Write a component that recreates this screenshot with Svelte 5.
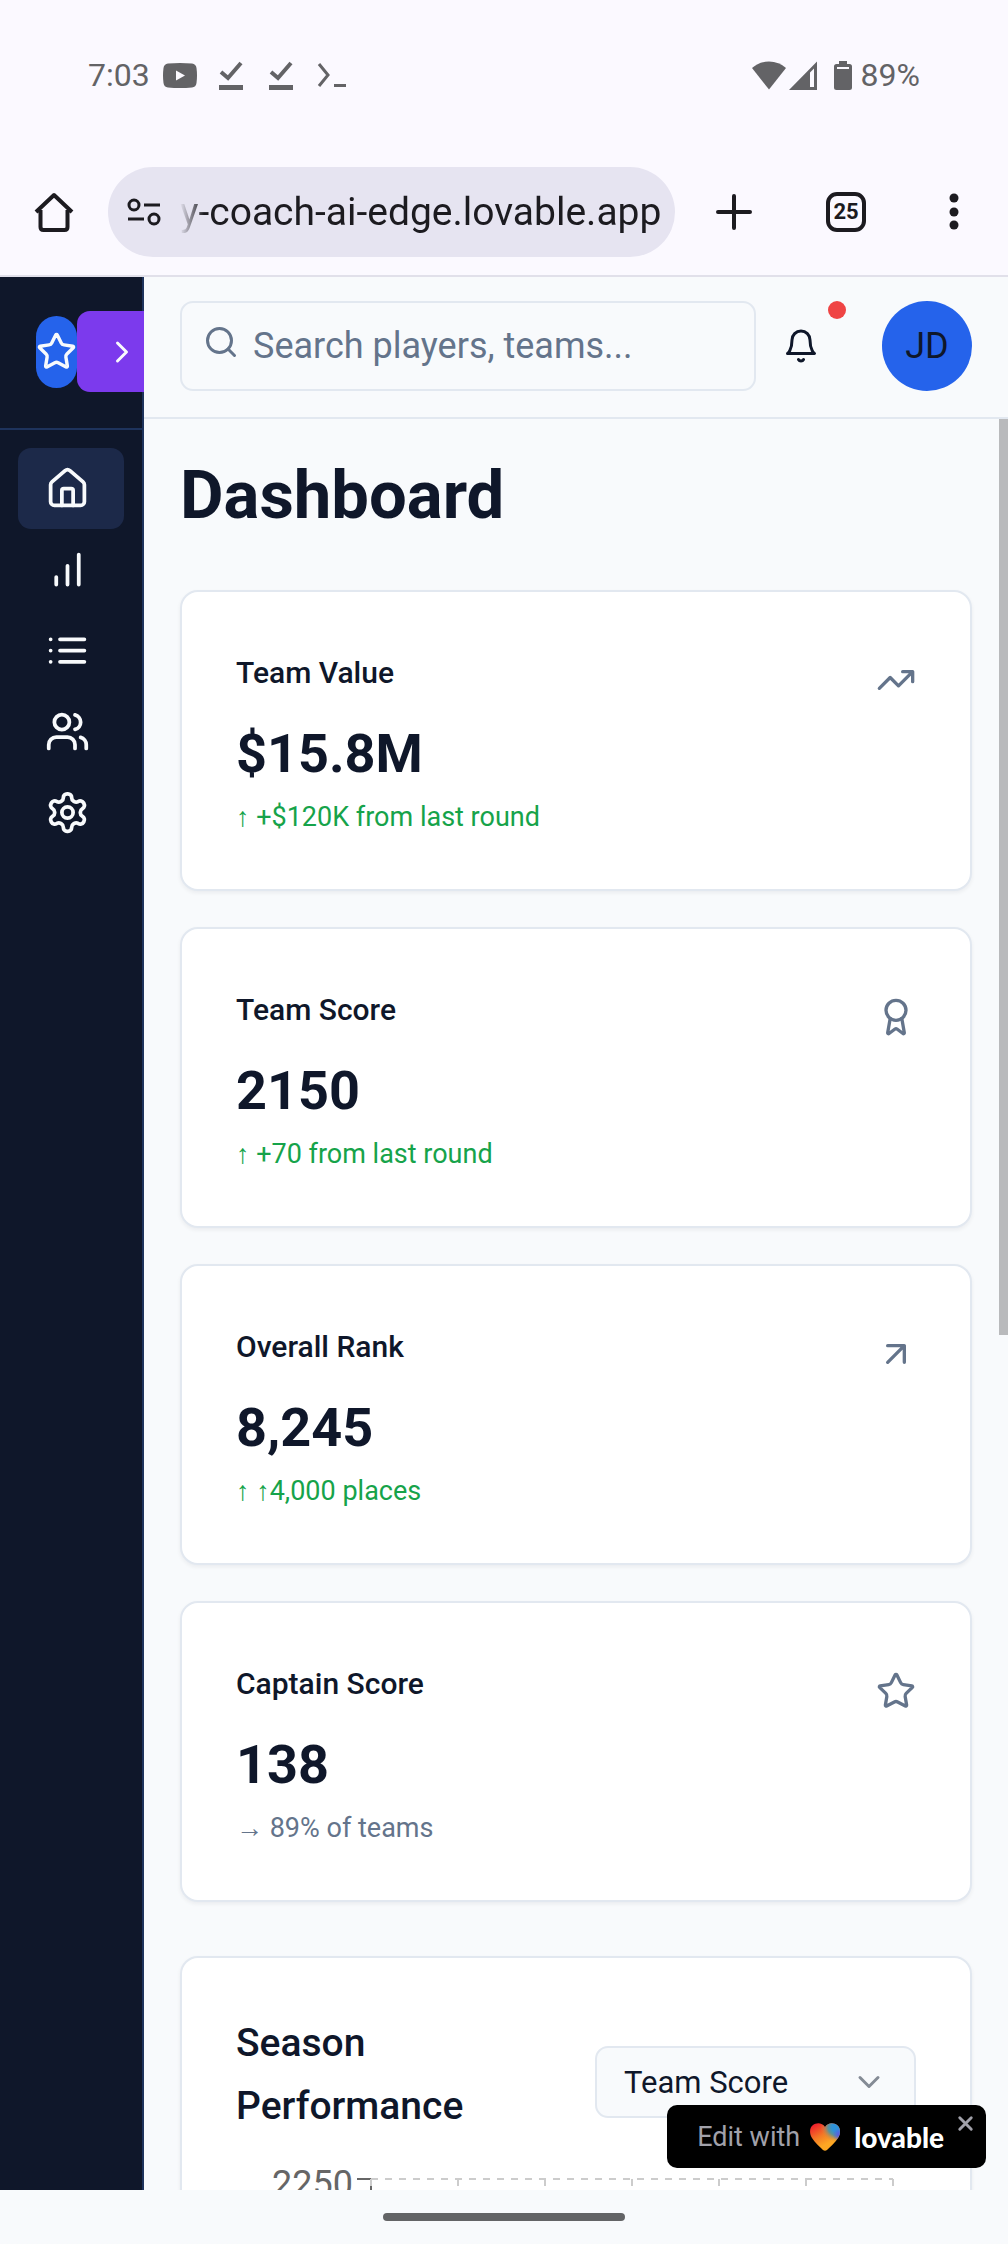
<script>
  const navItems = [
    { label: 'Dashboard', icon: 'home', active: true },
    { label: 'Statistics', icon: 'bars' },
    { label: 'Rankings', icon: 'list' },
    { label: 'Team', icon: 'users' },
    { label: 'Settings', icon: 'settings' },
  ];

  const stats = [
    { title: 'Team Value', value: '$15.8M', arrow: '↑', note: '+$120K from last round', trend: 'up', icon: 'trending' },
    { title: 'Team Score', value: '2150', arrow: '↑', note: '+70 from last round', trend: 'up', icon: 'award' },
    { title: 'Overall Rank', value: '8,245', arrow: '↑', note: '↑4,000 places', trend: 'up', icon: 'arrow' },
    { title: 'Captain Score', value: '138', arrow: '→', note: '89% of teams', trend: 'flat', icon: 'star' },
  ];

  const gridLines = [135, 222, 309, 396, 483, 570, 657];
  let search = $state('');
  let metric = $state('Team Score');
  let url = $state('y-coach-ai-edge.lovable.app');
</script>

{#snippet icon(name)}
  <svg class="icon" viewBox="0 0 24 24" aria-hidden="true">
    {#if name === 'home'}
      <path d="M15 21v-8a1 1 0 0 0-1-1h-4a1 1 0 0 0-1 1v8" />
      <path d="M3 10a2 2 0 0 1 .709-1.528l7-5.999a2 2 0 0 1 2.582 0l7 5.999A2 2 0 0 1 21 10v9a2 2 0 0 1-2 2H5a2 2 0 0 1-2-2z" />
    {:else if name === 'bars'}
      <path d="M12 20V10M18 20V4M6 20v-4" />
    {:else if name === 'list'}
      <path d="M8 6h13M8 12h13M8 18h13M3 6h.01M3 12h.01M3 18h.01" />
    {:else if name === 'users'}
      <path d="M16 21v-2a4 4 0 0 0-4-4H6a4 4 0 0 0-4 4v2" />
      <circle cx="9" cy="7" r="4" />
      <path d="M22 21v-2a4 4 0 0 0-3-3.87M16 3.13a4 4 0 0 1 0 7.75" />
    {:else if name === 'settings'}
      <path d="M12.22 2h-.44a2 2 0 0 0-2 2v.18a2 2 0 0 1-1 1.73l-.43.25a2 2 0 0 1-2 0l-.15-.08a2 2 0 0 0-2.73.73l-.22.38a2 2 0 0 0 .73 2.73l.15.1a2 2 0 0 1 1 1.72v.51a2 2 0 0 1-1 1.74l-.15.09a2 2 0 0 0-.73 2.73l.22.38a2 2 0 0 0 2.73.73l.15-.08a2 2 0 0 1 2 0l.43.25a2 2 0 0 1 1 1.73V20a2 2 0 0 0 2 2h.44a2 2 0 0 0 2-2v-.18a2 2 0 0 1 1-1.73l.43-.25a2 2 0 0 1 2 0l.15.08a2 2 0 0 0 2.73-.73l.22-.39a2 2 0 0 0-.73-2.73l-.15-.08a2 2 0 0 1-1-1.74v-.5a2 2 0 0 1 1-1.74l.15-.09a2 2 0 0 0 .73-2.73l-.22-.38a2 2 0 0 0-2.73-.73l-.15.08a2 2 0 0 1-2 0l-.43-.25a2 2 0 0 1-1-1.73V4a2 2 0 0 0-2-2z" />
      <circle cx="12" cy="12" r="3" />
    {:else if name === 'star'}
      <path d="M11.525 2.295a.53.53 0 0 1 .95 0l2.31 4.679a2.123 2.123 0 0 0 1.595 1.16l5.166.756a.53.53 0 0 1 .294.904l-3.736 3.638a2.123 2.123 0 0 0-.611 1.878l.882 5.14a.53.53 0 0 1-.771.56l-4.618-2.428a2.122 2.122 0 0 0-1.973 0L6.396 21.01a.53.53 0 0 1-.77-.56l.881-5.139a2.122 2.122 0 0 0-.611-1.879L2.16 9.795a.53.53 0 0 1 .294-.906l5.165-.755a2.122 2.122 0 0 0 1.597-1.16z" />
    {:else if name === 'trending'}
      <path d="m22 7-8.500 8.500-5-5L2 17M16 7h6v6" />
    {:else if name === 'award'}
      <path d="m15.477 12.890 1.515 8.526a.5.5 0 0 1-.810.470l-3.580-2.687a1 1 0 0 0-1.197 0l-3.586 2.686a.5.5 0 0 1-.810-.469l1.514-8.526" />
      <circle cx="12" cy="8" r="6" />
    {:else if name === 'arrow'}
      <path d="M7 7h10v10M7 17 17 7" />
    {:else if name === 'search'}
      <circle cx="11" cy="11" r="8" /><path d="m21 21-4.300-4.300" />
    {:else if name === 'bell'}
      <path d="M6 8a6 6 0 0 1 12 0c0 7 3 9 3 9H3s3-2 3-9M10.300 21a1.940 1.940 0 0 0 3.400 0" />
    {:else if name === 'right'}
      <path d="m9 18 6-6-6-6" />
    {:else if name === 'down'}
      <path d="m6 9 6 6 6-6" />
    {:else if name === 'close'}
      <path d="M18 6 6 18M6 6l12 12" />
    {/if}
  </svg>
{/snippet}

{#snippet checkMark()}
  <svg class="status-check" viewBox="0 0 24 29" aria-hidden="true">
    <path d="M2 11l7 6L22 2" fill="none" stroke="currentColor" stroke-width="4" />
    <path d="M0 24h24v5H0z" fill="currentColor" />
  </svg>
{/snippet}

<div class="screen">
  <header class="status">
    <div class="status-left">
      <span>7:03</span>
      <svg class="status-video" viewBox="0 0 34 25" aria-hidden="true">
        <path fill-rule="evenodd" fill="currentColor" d="M5 .5Q17-.5 29 .5Q33 1 33.500 5Q34.500 12.500 33.500 20Q33 24 29 24.500Q17 25.500 5 24.500Q1 24 .5 20Q-.5 12.500 .5 5Q1 1 5 .5ZM13 7.500v10l9-5z" />
      </svg>
      {@render checkMark()}
      {@render checkMark()}
      <svg class="status-terminal" viewBox="0 0 32 26" aria-hidden="true">
        <path d="M2 2l9 11-9 11" fill="none" stroke="currentColor" stroke-width="3" />
        <path d="M17 22h12v3H17z" fill="currentColor" />
      </svg>
    </div>
    <div class="status-right">
      <svg class="wifi" viewBox="0 0 34 29" aria-hidden="true"><path fill="currentColor" d="M0 7Q7 .5 17 .5T34 7L17 28.500z" /></svg>
      <svg class="signal" viewBox="0 0 28 29" aria-hidden="true"><path fill-rule="evenodd" fill="currentColor" d="M28 .5V29H0zM21 11.500V26h4V7.500z" /></svg>
      <svg class="battery" viewBox="0 0 18 29" aria-hidden="true"><path fill-rule="evenodd" fill="currentColor" d="M5 0h8v3h2.500Q18 3 18 5.500v21Q18 29 15.500 29h-13Q0 29 0 26.500v-21Q0 3 2.500 3H5zM3 6v2h12V6z" /></svg>
      <span>89%</span>
    </div>
  </header>

  <div class="toolbar">
    <button class="tool" aria-label="Home page">
      <svg class="tool-icon" viewBox="0 0 40 40" aria-hidden="true">
        <path d="M2 20 20 3l18 17M6.500 18v17q0 3 3 3h21q3 0 3-3V18" fill="none" stroke="currentColor" stroke-width="4" stroke-linejoin="round" />
      </svg>
    </button>
    <div class="omnibox">
      <svg class="tune" viewBox="0 0 34 28" fill="none" stroke="currentColor" aria-hidden="true">
        <circle cx="7" cy="7" r="5" stroke-width="3" /><path d="M17 7h16M1 21h16" stroke-width="3" />
        <circle cx="27" cy="21" r="5" stroke-width="3" />
      </svg>
      <input aria-label="Address" bind:value={url} />
    </div>
    <button class="tool plus" aria-label="New tab">
      <svg class="tool-icon" viewBox="0 0 40 40" aria-hidden="true"><path d="M20 4v32M4 20h32" stroke="currentColor" stroke-width="4" stroke-linecap="round" /></svg>
    </button>
    <button class="tool tabs" aria-label="Open tabs"><span>25</span></button>
    <button class="tool more" aria-label="Menu">
      <svg class="tool-icon" viewBox="0 0 40 40" fill="currentColor" aria-hidden="true"><circle cx="20" cy="6" r="4.500" /><circle cx="20" cy="20" r="4.500" /><circle cx="20" cy="33" r="4.500" /></svg>
    </button>
  </div>

  <div class="app">
    <aside>
      <div class="brand">
        <span class="logo">{@render icon('star')}</span>
        <button class="expand" aria-label="Expand sidebar">{@render icon('right')}</button>
      </div>
      <nav aria-label="Main">
        {#each navItems as item}
          <a href="#{item.icon}" class:active={item.active} aria-label={item.label}>{@render icon(item.icon)}</a>
        {/each}
      </nav>
    </aside>

    <div class="content">
      <div class="topbar">
        <label class="search">
          {@render icon('search')}
          <input type="text" aria-label="Search" placeholder="Search players, teams..." bind:value={search} />
        </label>
        <button class="bell" aria-label="Notifications">{@render icon('bell')}<span class="dot"></span></button>
        <button class="avatar" aria-label="Account">JD</button>
      </div>

      <div class="viewport">
        <main>
          <h1>Dashboard</h1>
          <div class="cards">
            {#each stats as stat}
              <section class="card">
                <div>
                  <h2>{stat.title}</h2>
                  <p class="value">{stat.value}</p>
                  <p class="note {stat.trend}">{stat.arrow} {stat.note}</p>
                </div>
                {@render icon(stat.icon)}
              </section>
            {/each}
          </div>
          <section class="card performance">
            <div class="performance-head">
              <h2>Season Performance</h2>
              <div class="select">
                <select aria-label="Metric" bind:value={metric}>
                  <option>Team Score</option>
                  <option>Team Value</option>
                </select>
                {@render icon('down')}
              </div>
            </div>
            <svg class="chart" viewBox="0 0 680 400" aria-label="Season performance chart">
              <text x="117" y="40" text-anchor="end">2250</text>
              <path class="axis" d="M121 23h14v377" />
              <path class="grid" d="M135 23h522" />
              {#each gridLines as x}
                <path class="grid" d="M{x} 23v377" />
              {/each}
            </svg>
          </section>
        </main>
        <div class="scroll-thumb"></div>
      </div>
    </div>

    <div class="badge">
      <a href="#lovable">
        <span class="edit">Edit with</span>
        <svg class="heart" viewBox="0 0 30 28" aria-hidden="true">
          <defs>
            <linearGradient id="warm" x1="0" y1="0" x2="0.6" y2="1">
              <stop offset="0.1" stop-color="#f0202c" /><stop offset="0.5" stop-color="#f47a25" /><stop offset="0.8" stop-color="#fda723" />
            </linearGradient>
            <radialGradient id="cool" cx="0.9" cy="0.15" r="0.55">
              <stop offset="0.3" stop-color="#2f92d8" /><stop offset="0.55" stop-color="#4b95a4" stop-opacity="0.9" /><stop offset="1" stop-color="#f58a28" stop-opacity="0" />
            </radialGradient>
            <radialGradient id="violet" cx="1" cy="0.42" r="0.25">
              <stop offset="0.1" stop-color="#5a55e8" /><stop offset="1" stop-color="#5a55e8" stop-opacity="0" />
            </radialGradient>
          </defs>
          {#each ['warm', 'cool', 'violet'] as fill}
            <path fill="url(#{fill})" d="M15 4C12-1 6-.5 3 2C-1 5-.5 11 2 15C5 20 10 24 13 27Q15 28.500 17 27C20 24 25 20 28 15C30.500 11 31 5 27 2C24-.5 18-1 15 4Z" />
          {/each}
        </svg>
        <strong>lovable</strong>
      </a>
      <button aria-label="Close badge">{@render icon('close')}</button>
    </div>
  </div>

  <footer><span></span></footer>
</div>

<style>
  :global(body) { margin: 0; }
  .screen {
    height: 100vh; display: flex; flex-direction: column; overflow: hidden;
    background: #fbf9ff; color: #0f172a; font-family: Roboto, "Liberation Sans", sans-serif;
  }
  .screen * { box-sizing: border-box; }
  button, input, select { font: inherit; color: inherit; border: 0; background: none; padding: 0; margin: 0; min-width: 0; }
  h1, h2, p { margin: 0; }
  a { color: inherit; text-decoration: none; }
  svg { display: block; flex: none; }
  .icon { width: 36px; height: 36px; fill: none; stroke: currentColor; stroke-width: 2; stroke-linecap: round; stroke-linejoin: round; }

  .status { height: 150px; flex: none; display: flex; justify-content: space-between; align-items: center; padding: 0 88px; color: #636366; font-size: 32px; }
  .status-left, .status-right { display: flex; align-items: center; }
  .status-video { width: 34px; height: 25px; margin-left: 13px; }
  .status-check { width: 24px; height: 29px; margin-left: 22px; }
  .status-check + .status-check { margin-left: 26px; }
  .status-terminal { width: 32px; height: 26px; margin-left: 24px; }
  .wifi { width: 34px; height: 29px; }
  .signal { width: 28px; height: 29px; margin-left: 3px; }
  .battery { width: 18px; height: 29px; margin: 0 9px 0 17px; }

  .toolbar { height: 127px; flex: none; display: flex; align-items: center; padding: 0 34px 2px; border-bottom: 2px solid #e1e0ea; color: #1c1b20; }
  .tool { width: 40px; height: 40px; flex: none; }
  .tool-icon { width: 40px; height: 40px; }
  .omnibox { flex: 1; min-width: 0; height: 90px; margin: 0 39px 0 34px; padding: 0 12px 0 19px; display: flex; align-items: center; gap: 19px; border-radius: 45px; background: #e6e4f1; }
  .tune { width: 34px; height: 28px; }
  .omnibox input { flex: 1; height: 60px; font-size: 39px; mask-image: linear-gradient(90deg, transparent, #000 24px); }
  .tabs { margin: 0 68px 0 72px; border: 4px solid; border-radius: 11px; font-size: 22px; font-weight: 700; display: grid; place-items: center; }

  .app { flex: 1; min-height: 0; display: flex; position: relative; background: #f8fafc; }
  aside { width: 144px; flex: none; background: #0f172a; border-right: 2px solid #1e335c; color: #f8fafc; }
  .brand { height: 153px; padding: 0 0 2px 36px; display: flex; align-items: center; border-bottom: 2px solid #1e335c; }
  .logo { width: 41px; height: 72px; flex: none; display: grid; place-items: center; border-radius: 21px; background: #2563eb; }
  .logo .icon, .logo :global(.icon) { width: 41px; height: 41px; }
  .expand { width: 67px; height: 81px; flex: none; padding-left: 27px; border-radius: 13px 0 0 13px; background: #7c3aed; }
  nav { padding: 18px; }
  nav a { display: flex; align-items: center; height: 81px; padding-left: 27px; border-radius: 13px; }
  nav a.active { background: #1c2949; }
  nav .icon, nav :global(.icon) { width: 45px; height: 45px; }

  .content { flex: 1; min-width: 0; display: flex; flex-direction: column; }
  .topbar { height: 142px; flex: none; display: flex; align-items: center; padding: 0 36px 2px; border-bottom: 2px solid #e2e8f0; font-size: 36px; }
  .search { flex: 1; min-width: 0; height: 90px; display: flex; align-items: center; gap: 14px; padding: 0 21px; border: 2px solid #e2e8f0; border-radius: 13px; color: #64748b; }
  .search .icon, .search :global(.icon) { margin-bottom: 8px; }
  .search input { flex: 1; height: 80px; }
  .search input::placeholder { color: #64748b; opacity: 1; }
  .bell { width: 90px; height: 90px; flex: none; display: grid; place-items: center; position: relative; }
  .dot { position: absolute; top: 0; right: 0; width: 18px; height: 18px; border-radius: 50%; background: #ef4444; }
  .avatar { width: 90px; height: 90px; flex: none; margin-left: 36px; border-radius: 50%; background: #2563eb; }

  .viewport { flex: 1; min-height: 0; position: relative; }
  main { height: 100%; overflow-y: auto; scrollbar-width: none; padding: 36px; display: flex; flex-direction: column; gap: 54px; }
  main > * { flex: none; }
  .scroll-thumb { position: absolute; top: 0; right: 0; width: 9px; height: 51.7%; background: #b9babc; }
  h1 { font-size: 67px; line-height: 81px; font-weight: 700; }
  .cards { display: grid; gap: 36px; }
  .card { display: flex; justify-content: space-between; padding: 54px; border: 2px solid #e2e8f0; border-radius: 18px; background: #fff; box-shadow: 0 2px 4px rgb(15 23 42 / 6%); }
  .card > .icon, .card > :global(.icon) { width: 40px; height: 40px; margin-top: 14px; color: #64748b; }
  .card h2 { font-size: 30px; line-height: 54px; font-weight: 500; }
  .value { margin-top: 18px; font-size: 54px; line-height: 72px; font-weight: 700; }
  .note { margin-top: 9px; font-size: 27px; line-height: 36px; }
  .up { color: #16a34a; }
  .flat { color: #64748b; }

  .performance { flex-direction: column; }
  .performance-head { display: flex; justify-content: space-between; gap: 36px; }
  .performance h2 { width: min-content; font-size: 39px; line-height: 63px; }
  .select { width: 321px; height: 72px; margin-top: 34px; display: grid; align-items: center; border: 2px solid #e2e8f0; border-radius: 13px; background: #f8fafc; }
  .select select, .select .icon { grid-area: 1 / 1; }
  .select select { appearance: none; height: 68px; width: 100%; padding: 0 27px; font-size: 31px; }
  .select .icon, .select :global(.icon) { justify-self: end; margin-right: 27px; color: #848b95; pointer-events: none; }
  .chart { width: 100%; margin-top: 18px; font-size: 36px; }
  .chart text { fill: #666; }
  .axis, .grid { fill: none; stroke: #666; stroke-width: 2; }
  .grid { stroke: #ccc; stroke-dasharray: 7; }

  .badge { position: absolute; right: 22px; bottom: 22px; height: 63px; display: flex; padding: 0 9px 0 30px; border-radius: 10px; background: #000; }
  .badge a { display: flex; align-items: center; }
  .edit { color: #a1a1aa; font-size: 27px; }
  .heart { width: 30px; height: 28px; margin: 0 14px 0 10px; }
  .badge strong { color: #fff; font-family: Lato, sans-serif; font-size: 28px; font-weight: 900; }
  .badge button { width: 23px; height: 23px; margin: 7px 0 0 10px; color: #a1a1aa; }
  .badge button .icon, .badge button :global(.icon) { width: 23px; height: 23px; stroke-width: 3; }

  footer { height: 54px; flex: none; display: grid; place-items: center; background: #f8fafc; }
  footer span { width: 24%; height: 8px; border-radius: 4px; background: #636466; }
</style>
